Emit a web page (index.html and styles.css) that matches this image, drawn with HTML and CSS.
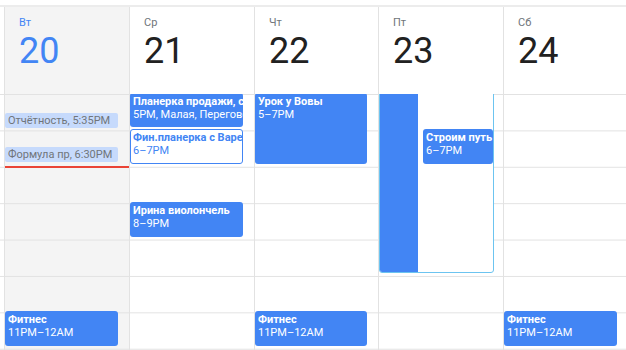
FILE: index.html
```html
<!DOCTYPE html>
<html lang="ru">
<head>
  <meta charset="UTF-8">
  <title>Календарь</title>
  <link rel="stylesheet" href="styles.css">
</head>
<body>

  <div class="calendar">
    <div class="week-head">
      <div class="gutter"></div>
      <div class="day-head today"><span class="dow">Вт</span><span class="num">20</span></div>
      <div class="day-head"><span class="dow">Ср</span><span class="num">21</span></div>
      <div class="day-head"><span class="dow">Чт</span><span class="num">22</span></div>
      <div class="day-head"><span class="dow">Пт</span><span class="num">23</span></div>
      <div class="day-head"><span class="dow">Сб</span><span class="num">24</span></div>
    </div>

    <div class="week-body" id="weekBody">
      <div class="gutter"></div>
      <div class="day today"></div>
      <div class="day"></div>
      <div class="day"></div>
      <div class="day"></div>
      <div class="day"></div>
    </div>
  </div>

  <script>
    const HOUR = 36.4;   // px per hour row
    const FIRST = 17;    // grid starts at 5PM

    const events = [
      { day: 0, kind: "chip", title: "Отчётность", time: "5:35PM", start: 17 + 35 / 60 },
      { day: 0, kind: "chip", title: "Формула пр", time: "6:30PM", start: 18.5 },
      { day: 0, title: "Фитнес", time: "11PM–12AM", start: 23, end: 24 },

      { day: 1, title: "Планерка продажи, склад", time: "5PM, Малая, Переговорная", start: 17, end: 18 },
      { day: 1, kind: "outline", title: "Фин.планерка с Варей", time: "6–7PM", start: 18, end: 19 },
      { day: 1, title: "Ирина виолончель", time: "8–9PM", start: 20, end: 21 },

      { day: 2, title: "Урок у Вовы", time: "5–7PM", start: 17, end: 19 },
      { day: 2, title: "Фитнес", time: "11PM–12AM", start: 23, end: 24 },

      { day: 3, kind: "span", start: 15, end: 22 },
      { day: 3, kind: "shifted", title: "Строим путь", time: "6–7PM", start: 18, end: 19 },

      { day: 4, title: "Фитнес", time: "11PM–12AM", start: 23, end: 24 }
    ];

    function renderWeek() {
      const days = document.querySelectorAll("#weekBody .day");

      // current time marker on today's column
      const now = document.createElement("div");
      now.className = "now-line";
      now.style.top = (19 - FIRST) * HOUR - 1 + "px";
      days[0].appendChild(now);

      events.forEach(ev => {
        const div = document.createElement("div");
        const top = (ev.start - FIRST) * HOUR;

        if (ev.kind === "chip") {
          div.className = "chip";
          div.style.top = top - 2 + "px";
          div.textContent = `${ev.title}, ${ev.time}`;
        } else {
          div.className = "event" + (ev.kind ? " " + ev.kind : "");
          div.style.top = top - 1 + "px";
          div.style.height = (ev.end - ev.start) * HOUR - 2 + "px";
          if (ev.kind === "span") {
            div.innerHTML = `<div class="fill"></div>`;
          } else {
            div.innerHTML = `<b>${ev.title}</b><span>${ev.time}</span>`;
          }
        }
        days[ev.day].appendChild(div);
      });
    }

    renderWeek();
  </script>

</body>
</html>
```

FILE: styles.css
```css
:root {
  --blue: #4285f4;
  --line: #e2e2e2;
  --today: #f4f4f4;
}

body {
  margin: 0;
  font-family: Roboto, "Noto Sans", sans-serif;
  background: #fff;
  overflow: hidden;
}

.calendar {
  width: 626px;
  height: 345px;
  margin-top: 5px;
  border-top: 2px solid #ececec;
  display: flex;
  flex-direction: column;
}

.week-head,
.week-body {
  display: grid;
  grid-template-columns: 4px 125px 125px 124px 125px 1fr;
}

.week-head {
  height: 87px;
}

.day-head {
  border-left: 1px solid var(--line);
  padding: 9px 0 0 14px;
}

.dow {
  display: block;
  font-size: 11px;
  line-height: 13px;
  color: #70757a;
}

.num {
  display: block;
  margin-top: 2px;
  font-size: 36px;
  line-height: 40px;
  color: #212121;
}

.today {
  background-color: var(--today);
}

.today .dow,
.today .num {
  color: var(--blue);
}

.week-body {
  flex: 1;
}

.week-body .gutter,
.day {
  background-image: linear-gradient(var(--line) 1px, transparent 1px);
  background-size: 100% 36.4px;
}

.day {
  position: relative;
  border-left: 1px solid var(--line);
  overflow: hidden;
}

.event {
  position: absolute;
  left: 0;
  right: 11px;
  box-sizing: border-box;
  padding: 2px 3px;
  background: var(--blue);
  color: #fff;
  border-radius: 3px;
  font-size: 11px;
  line-height: 13px;
  white-space: nowrap;
  overflow: hidden;
}

.day:last-child .event {
  right: 9px;
}

.event b,
.event span {
  display: block;
}

.event b {
  font-weight: 700;
}

.event.outline {
  background: #fff;
  border: 1px solid var(--blue);
  padding: 1px 2px;
  color: var(--blue);
}

.event.span {
  right: 9px;
  padding: 0;
  background: #fff;
  border: 1px solid #6cc4f0;
  border-radius: 0 0 3px 3px;
}

.event.span .fill {
  width: 38px;
  height: 100%;
  background: var(--blue);
}

.event.shifted {
  left: 44px;
  right: 10px;
  z-index: 2;
}

.chip {
  position: absolute;
  left: 0;
  right: 11px;
  height: 15px;
  box-sizing: border-box;
  padding: 1px 3px 0;
  background: #c6dafc;
  border-radius: 2px;
  color: #70757a;
  font-size: 11px;
  line-height: 14px;
  white-space: nowrap;
  overflow: hidden;
}

.now-line {
  position: absolute;
  left: 0;
  right: 0;
  height: 2px;
  background: #ea4335;
  z-index: 3;
}
```
